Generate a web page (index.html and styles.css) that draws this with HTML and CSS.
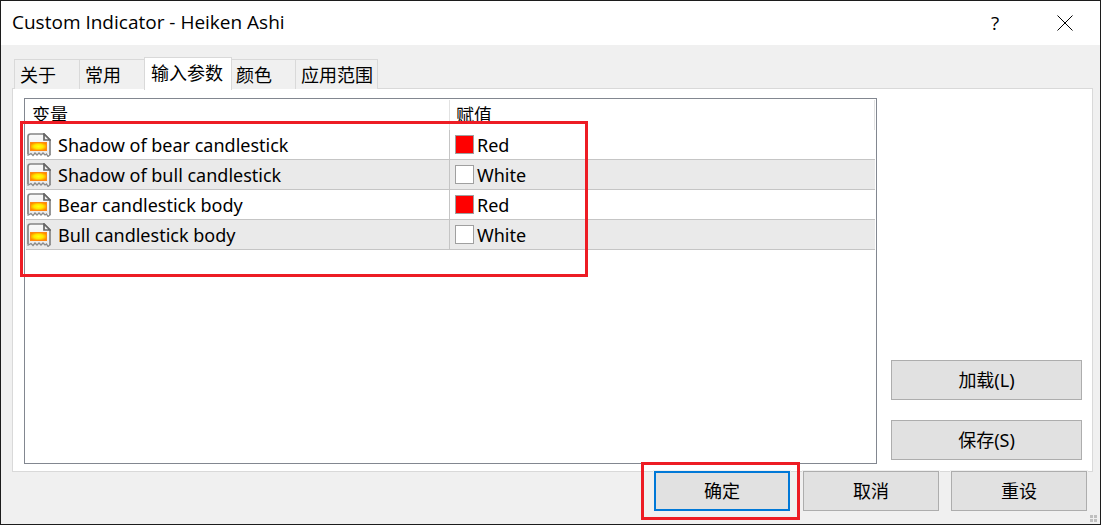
FILE: index.html
```html
<!DOCTYPE html>
<html lang="zh-CN">
<head>
<meta charset="utf-8">
<title>Custom Indicator - Heiken Ashi</title>
<link rel="stylesheet" href="styles.css">
</head>
<body>
<svg class="defs" aria-hidden="true">
  <defs>
    <radialGradient id="glow" r=".62"><stop offset="0" stop-color="#ffff10"/><stop offset=".5" stop-color="#ffe600"/><stop offset="1" stop-color="#ff8500"/></radialGradient>
    <linearGradient id="paper" x2="0" y2="1"><stop offset="0" stop-color="#fafafa"/><stop offset="1" stop-color="#e9e9e9"/></linearGradient>
    <symbol id="param" viewBox="0 0 24 24">
      <path d="M3 1h14l6 6v15l-2-1-2-1-2 1.500-2-1.500-2 1.500-2-1.500-2 1.500-2-1.500-2 1.500-4 1V3z" fill="url(#paper)"/>
      <path d="M1 21.500V3.500Q1 1 3.500 1H17l6 6v15" fill="none" stroke="#858585" stroke-width="1.700"/>
      <path d="M17 1v6h6z" fill="#f2f2f2" stroke="#666" stroke-width="1.700"/>
      <path d="M.5 22.500l3.500-2 2 2 2-2.500 2 2 2-2 2 2 2-2 2 2 1.500-1 1.500 2.500 2.500-2" fill="none" stroke="#8a8a8a" stroke-width="1.300"/>
      <rect x="3" y="9" width="17" height="9" fill="#ff8a10"/>
      <rect x="4" y="10" width="15" height="7" fill="url(#glow)"/>
    </symbol>
  </defs>
</svg>
<main class="window">
  <header class="titlebar">
    <h1 class="title">Custom Indicator - Heiken Ashi</h1>
    <button class="caption help" aria-label="Help">?</button>
    <button class="caption" aria-label="Close"><svg class="close" viewBox="0 0 16 16"><path d="M.5.5l15 15M15.500.5l-15 15"/></svg></button>
  </header>
  <nav class="tabs" role="tablist">
    <button class="tab" role="tab">关于</button>
    <button class="tab" role="tab">常用</button>
    <button class="tab active" role="tab" aria-selected="true">输入参数</button>
    <button class="tab after" role="tab">颜色</button>
    <button class="tab last" role="tab">应用范围</button>
  </nav>
  <section class="panel">
    <div class="list">
      <table class="grid">
        <thead><tr><th class="name">变量</th><th class="value">赋值</th></tr></thead>
        <tbody>
          <tr><td><div class="cell"><svg class="icon"><use href="#param"/></svg>Shadow of bear candlestick</div></td><td><div class="cell"><span class="swatch red"></span>Red</div></td></tr>
          <tr><td><div class="cell"><svg class="icon"><use href="#param"/></svg>Shadow of bull candlestick</div></td><td><div class="cell"><span class="swatch"></span>White</div></td></tr>
          <tr><td><div class="cell"><svg class="icon"><use href="#param"/></svg>Bear candlestick body</div></td><td><div class="cell"><span class="swatch red"></span>Red</div></td></tr>
          <tr><td><div class="cell"><svg class="icon"><use href="#param"/></svg>Bull candlestick body</div></td><td><div class="cell"><span class="swatch"></span>White</div></td></tr>
        </tbody>
      </table>
      <div class="mark mark-rows"></div>
    </div>
    <div class="side">
      <button class="button">加载(L)</button>
      <button class="button">保存(S)</button>
    </div>
  </section>
  <footer class="actions">
    <div class="confirm"><button class="button primary">确定</button><div class="mark mark-ok"></div></div>
    <button class="button">取消</button>
    <button class="button">重设</button>
  </footer>
  <svg class="grip" viewBox="0 0 7 7"><path d="M0 0h3v3H0zM4 0h3v3H4zM0 4h3v3H0zM4 4h3v3H4z" fill="#bfbfbf"/></svg>
</main>
</body>
</html>
```
FILE: styles.css
```css
* { box-sizing: border-box; }
body {
  margin: 0;
  font: 18px/24px "Noto Sans", "Noto Sans CJK SC", sans-serif;
  color: #000;
}
button { font: inherit; color: inherit; padding: 0; border-radius: 0; }
.defs { position: absolute; width: 0; height: 0; }
.window {
  position: relative;
  display: flex;
  flex-direction: column;
  min-height: 100vh;
  border: 1px solid #1c1c1c;
  background: #f0f0f0;
}
.titlebar { display: flex; height: 44px; background: #fff; }
.title { flex: 1; margin: 0; padding-left: 11px; font: 400 19px/42px "Open Sans", sans-serif; }
.caption { display: grid; place-items: center; width: 70px; border: 0; background: none; }
.help { font: 400 19px "Open Sans", sans-serif; }
.close { width: 16px; height: 16px; fill: none; stroke: #000; stroke-width: 1; }
.tabs { display: flex; align-items: flex-end; height: 44px; padding: 12px 0 0 13px; position: relative; z-index: 1; }
.tab {
  width: 65px;
  height: 30px;
  padding-left: 5px;
  border: solid #d9d9d9;
  border-width: 1px 0 0 1px;
  background: #f0f0f0;
  text-align: left;
}
.tab.active { width: 88px; height: 33px; margin-bottom: -1px; padding: 0 0 3px 6px; border-right-width: 1px; background: #fff; }
.tab.after { width: 63px; padding-left: 4px; border-left: 0; }
.tab.last { width: 83px; border-right-width: 1px; }
.panel {
  display: flex;
  flex: 1;
  gap: 14px;
  margin: -1px 7px 0 11px;
  padding: 9px 10px 7px 11px;
  border: 1px solid #d9d9d9;
  background: #fff;
}
.list { position: relative; flex: 1; padding: 1px; border: 1px solid #828790; }
.grid { width: 100%; table-layout: fixed; border-collapse: separate; border-spacing: 0; }
.name { width: 424px; }
.grid th { height: 30px; padding: 0 6px; border-right: 1px solid #e2e2e2; font-weight: 400; text-align: left; }
.grid td { height: 30px; padding: 0; border-bottom: 1px solid #c5c5c5; }
.grid td:first-child { border-right: 1px solid #c5c5c5; }
.grid tbody tr:nth-child(even) { background: #eaeaea; }
.cell { display: flex; align-items: center; gap: 7px; height: 29px; padding-left: 1px; }
.icon { width: 24px; height: 24px; }
td + td .cell { gap: 3px; padding-left: 5px; }
.swatch { width: 19px; height: 19px; border: 1px solid #a0a0a0; background: #fff; }
.swatch.red { background: #f00; }
.side { display: flex; flex-direction: column; justify-content: flex-end; gap: 20px; width: 191px; padding-bottom: 4px; }
.button { height: 40px; border: 1px solid #adadad; background: #e1e1e1; }
.actions { display: flex; justify-content: flex-end; gap: 12px; margin-top: -1px; padding: 0 13px 13px 0; }
.actions .button { width: 136px; box-shadow: 0 0 0 1px #f0f0f0; }
.confirm { position: relative; margin-right: 1px; }
.button.primary { display: block; border: 2px solid #0078d7; }
.mark { position: absolute; border: 3px solid #ed1c24; pointer-events: none; }
.mark-rows { top: 22px; left: -5px; width: 568px; height: 156px; }
.mark-ok { inset: -9px -10px -9px -13px; }
.grip { position: absolute; right: 3px; bottom: 2px; width: 7px; height: 7px; }
```
